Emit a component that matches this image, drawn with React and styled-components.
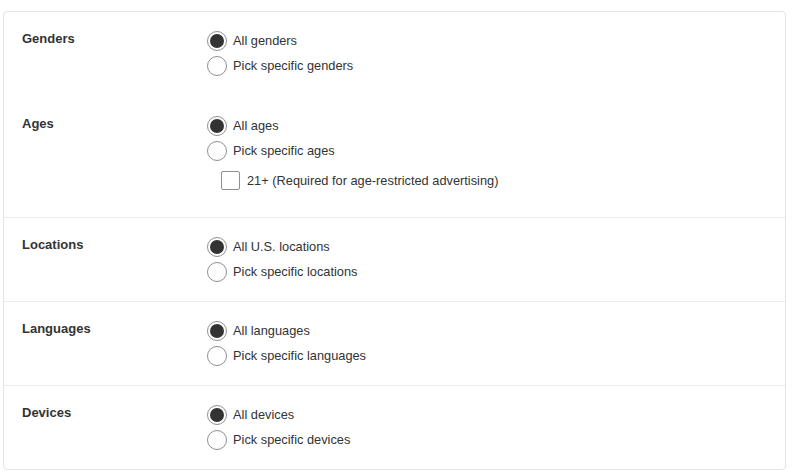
import React, { useState } from "react";
import styled, { createGlobalStyle } from "styled-components";

const GlobalStyle = createGlobalStyle`
  body {
    margin: 0;
    background: #fff;
    font-family: "Liberation Sans", Arial, sans-serif;
    color: #333;
  }
`;

const groups = [
  {
    section: 0,
    label: "Genders",
    options: ["All genders", "Pick specific genders"],
  },
  {
    section: 0,
    label: "Ages",
    options: ["All ages", "Pick specific ages"],
    extra: "21+ (Required for age-restricted advertising)",
  },
  {
    section: 1,
    label: "Locations",
    options: ["All U.S. locations", "Pick specific locations"],
  },
  {
    section: 2,
    label: "Languages",
    options: ["All languages", "Pick specific languages"],
  },
  {
    section: 3,
    label: "Devices",
    options: ["All devices", "Pick specific devices"],
  },
];

const Group = ({ group }) => {
  const [picked, setPicked] = useState(0);
  const [checked, setChecked] = useState(false);

  return (
    <GroupRow>
      <Label>{group.label}</Label>
      <Options>
        {group.options.map((opt, i) => (
          <Option key={opt} onClick={() => setPicked(i)}>
            <Radio $on={picked === i} />
            <span>{opt}</span>
          </Option>
        ))}
        {group.extra && (
          <CheckRow onClick={() => setChecked(!checked)}>
            <Box $on={checked} />
            <span>{group.extra}</span>
          </CheckRow>
        )}
      </Options>
    </GroupRow>
  );
};

const App = () => {
  const sections = [0, 1, 2, 3].map((s) => groups.filter((g) => g.section === s));

  return (
    <>
      <GlobalStyle />
      <Card>
        {sections.map((list, i) => (
          <Section key={i} $first={i === 0}>
            {list.map((g) => (
              <Group key={g.label} group={g} />
            ))}
          </Section>
        ))}
      </Card>
    </>
  );
};

const Card = styled.div`
  margin: 11px 0 0 3px;
  width: 783px;
  box-sizing: border-box;
  border: 1px solid #e4e4e4;
  border-radius: 4px;
  background: #fff;
`;

const Section = styled.div`
  display: flex;
  flex-direction: column;
  gap: 35px;
  padding: 16px 18px 17px;
  border-top: ${(p) => (p.$first ? "none" : "1px solid #ebebeb")};

  &:first-child {
    padding-bottom: 24px;
  }
`;

const GroupRow = styled.div`
  display: grid;
  grid-template-columns: 185px 1fr;
  align-items: start;
`;

const Label = styled.div`
  font-size: 13px;
  font-weight: bold;
  line-height: 22px;
  color: #333;
`;

const Options = styled.div`
  display: flex;
  flex-direction: column;
`;

const Option = styled.label`
  display: flex;
  align-items: center;
  gap: 6px;
  height: 25px;
  font-size: 12.8px;
  color: #333;
  cursor: pointer;
`;

const Radio = styled.span`
  width: 20px;
  height: 20px;
  box-sizing: border-box;
  border-radius: 50%;
  border: 1px solid #8f8f8f;
  background: #fff;
  position: relative;

  &::after {
    content: "";
    display: ${(p) => (p.$on ? "block" : "none")};
    position: absolute;
    inset: 2px;
    border-radius: 50%;
    background: #333;
  }
`;

const CheckRow = styled.label`
  display: flex;
  align-items: center;
  gap: 7px;
  height: 26px;
  margin-top: 4px;
  padding-left: 14px;
  font-size: 12.8px;
  color: #333;
  cursor: pointer;
`;

const Box = styled.span`
  width: 19px;
  height: 19px;
  box-sizing: border-box;
  border: 1px solid #8f8f8f;
  border-radius: 2px;
  background: ${(p) => (p.$on ? "#333" : "#fff")};
`;

export default App;
